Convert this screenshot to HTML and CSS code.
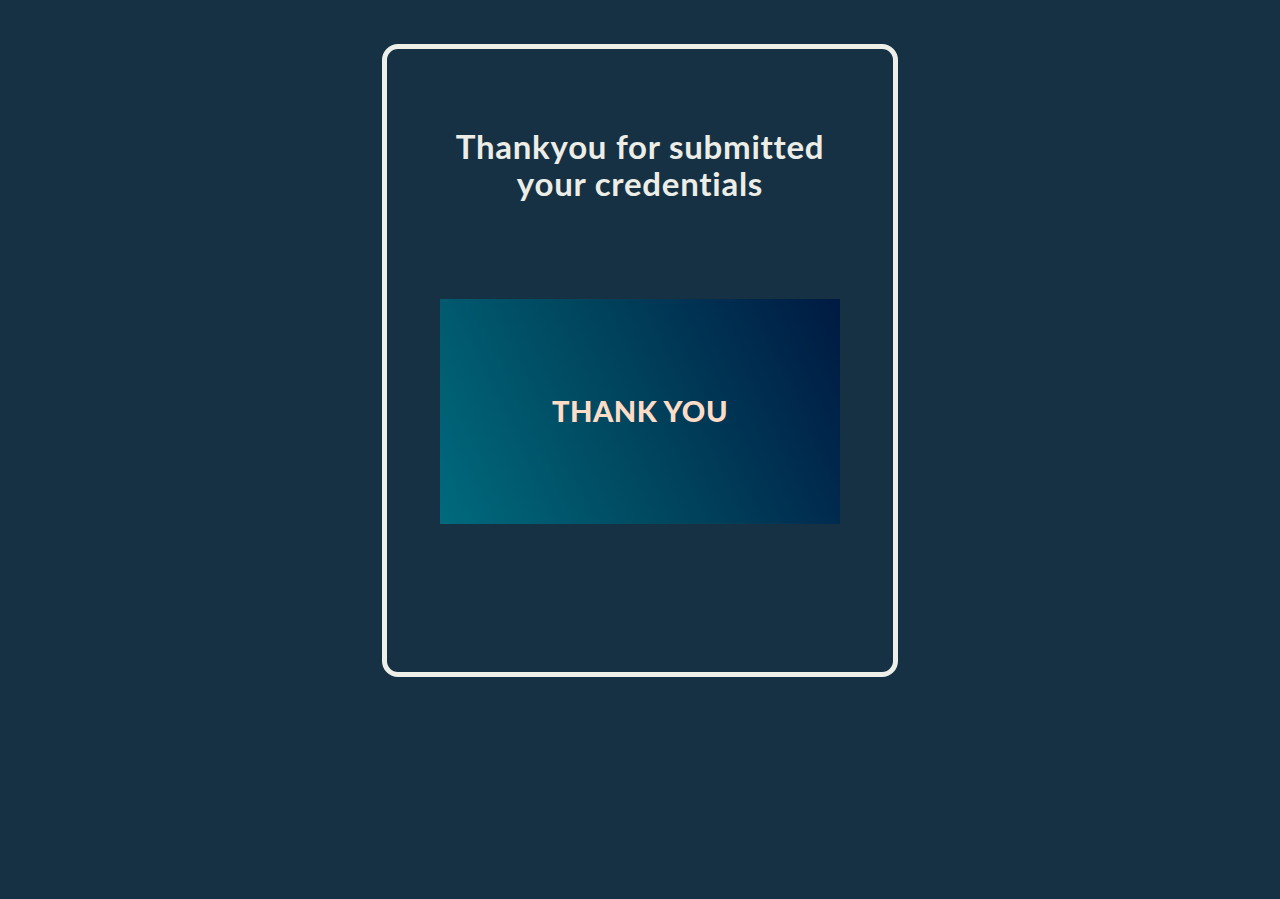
FILE: index.html
```html
<!DOCTYPE html>
<html lang="en">
<head>
<meta charset="utf-8">
<title>Thank you</title>
<link rel="stylesheet" href="styles.css">
</head>
<body>
<main class="page">
  <section class="card">
    <h1 class="title">Thankyou for submitted your credentials</h1>
    <div class="banner">
      <span class="banner-text">THANK YOU</span>
    </div>
  </section>
</main>
</body>
</html>
```
FILE: styles.css
```css
html, body {
  margin: 0;
  padding: 0;
  background: #163143;
  height: 100%;
}
.page {
  display: flex;
  justify-content: center;
  padding-top: 44px;
}
.card {
  box-sizing: border-box;
  width: 516px;
  height: 633px;
  border: 5px solid #eeefe9;
  border-radius: 16px;
  padding: 79px 0 0;
  display: flex;
  flex-direction: column;
  align-items: center;
}
.title {
  margin: 0;
  width: 400px;
  text-align: center;
  font-family: "Lato", "Open Sans", sans-serif;
  font-weight: 700;
  font-size: 33px;
  line-height: 37px;
  color: #ecede6;
  letter-spacing: 0.75px;
}
.banner {
  margin-top: 97px;
  width: 400px;
  height: 225px;
  background: linear-gradient(65deg, #006a7d 0%, #00475f 45%, #002e50 75%, #001a42 100%);
  display: flex;
  align-items: center;
  justify-content: center;
}
.banner-text {
  font-family: "Lato", "Open Sans", sans-serif;
  font-weight: 900;
  font-size: 29px;
  color: #ffdcc6;
  letter-spacing: 0.5px;
  line-height: 1;
  margin-top: -2px;
}
```
